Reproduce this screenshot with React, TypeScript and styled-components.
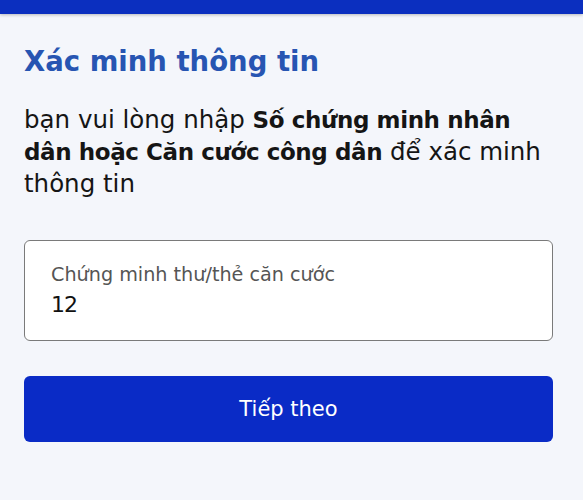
import styled, { createGlobalStyle } from 'styled-components';

const GlobalStyle = createGlobalStyle`
  html, body {
    margin: 0;
    padding: 0;
    background: #f4f6fb;
  }
  * {
    box-sizing: border-box;
  }
`;

const Page = styled.div`
  width: 583px;
  height: 500px;
  background: #f4f6fb;
  font-family: 'DejaVu Sans', 'Noto Sans', sans-serif;
  overflow: hidden;
`;

const TopBar = styled.div`
  height: 14px;
  background: #0b2fbf;
  box-shadow: 0 1px 3px rgba(0, 0, 0, 0.25);
`;

const Content = styled.div`
  padding: 30px 30px 0 24px;
  display: flex;
  flex-direction: column;
`;

const Title = styled.h1`
  margin: 0;
  font-size: 27.5px;
  font-weight: 700;
  color: #2755b2;
  line-height: 34px;
`;

const Lead = styled.p`
  margin: 26px 0 0;
  font-size: 24.5px;
  line-height: 31px;
  color: #151515;
  b {
    font-size: 23px;
    font-weight: 700;
    letter-spacing: -0.4px;
  }
`;

const Field = styled.div`
  margin-top: 41px;
  height: 101px;
  background: #fff;
  border: 1px solid #7a7a7a;
  border-radius: 6px;
  padding: 23px 25px 0 26px;
  display: flex;
  flex-direction: column;
  gap: 6px;
`;

const FieldLabel = styled.label`
  font-size: 19.2px;
  color: #555;
  line-height: 22px;
`;

const FieldValue = styled.input`
  border: none;
  outline: none;
  padding: 0;
  height: 26px;
  font-family: inherit;
  font-size: 22px;
  letter-spacing: -1px;
  color: #111;
  background: transparent;
  line-height: 26px;
`;

const NextButton = styled.button`
  margin-top: 35px;
  height: 66px;
  border: none;
  border-radius: 6px;
  background: #0a2bc6;
  color: #fff;
  font-family: inherit;
  font-size: 21px;
  cursor: pointer;
`;

export default function App() {
  return (
    <Page>
      <GlobalStyle />
      <TopBar />
      <Content>
        <Title>Xác minh thông tin</Title>
        <Lead>
          bạn vui lòng nhập <b>Số chứng minh nhân dân hoặc Căn cước công dân</b> để xác minh
          thông tin
        </Lead>
        <Field>
          <FieldLabel>Chứng minh thư/thẻ căn cước</FieldLabel>
          <FieldValue defaultValue="12" />
        </Field>
        <NextButton>Tiếp theo</NextButton>
      </Content>
    </Page>
  );
}
